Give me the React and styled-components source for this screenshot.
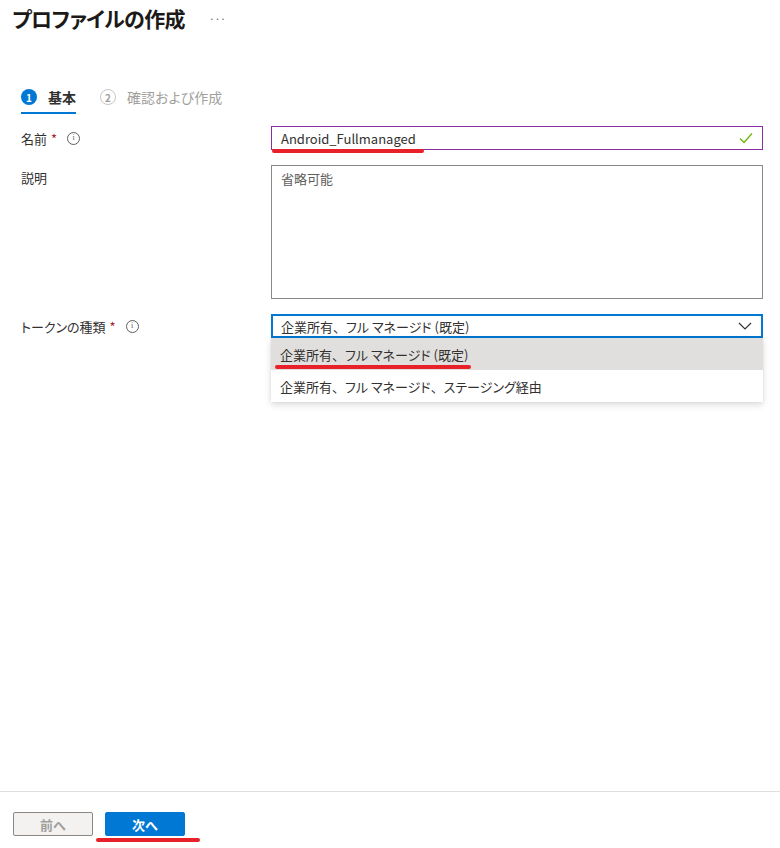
import React from 'react';
import styled, { createGlobalStyle } from 'styled-components';

const GlobalStyle = createGlobalStyle`
  html, body {
    margin: 0;
    padding: 0;
    background: #ffffff;
  }
  body {
    font-family: "Noto Sans CJK JP", "Noto Sans", "Liberation Sans", sans-serif;
    font-feature-settings: "palt";
    color: #323130;
  }
`;

const Page = styled.div`
  display: flex;
  flex-direction: column;
  width: 780px;
  height: 848px;
  overflow: hidden;
`;

const Header = styled.div`
  display: flex;
  align-items: center;
  gap: 24px;
  padding: 3px 12px 0;
  height: 30px;
`;

const Title = styled.h1`
  margin: 0;
  font-size: 21px;
  font-weight: 600;
  letter-spacing: -0.6px;
  color: #1b1a19;
`;

const More = styled.span`
  font-size: 10px;
  color: #605e5c;
`;

const Steps = styled.div`
  display: flex;
  gap: 24px;
  padding: 50px 21px 0;
`;

const Step = styled.div`
  display: flex;
  align-items: center;
  gap: 11px;
  height: 28px;
  border-bottom: 2px solid ${p => (p.active ? '#0078d4' : 'transparent')};
  font-size: 14px;
  font-weight: ${p => (p.active ? 600 : 400)};
  color: ${p => (p.active ? '#323130' : '#a19f9d')};
  padding-bottom: 1px;
`;

const StepNum = styled.span`
  width: 16px;
  height: 16px;
  border-radius: 50%;
  display: flex;
  align-items: center;
  justify-content: center;
  font-size: 10px;
  font-weight: 700;
  box-sizing: border-box;
  background: ${p => (p.active ? '#0078d4' : 'transparent')};
  color: ${p => (p.active ? '#ffffff' : '#a19f9d')};
  border: ${p => (p.active ? 'none' : '1.5px solid #c8c6c4')};
`;

const Form = styled.div`
  display: flex;
  flex-direction: column;
  gap: 15px;
  padding: 12px 17px 0 21px;
`;

const Row = styled.div`
  display: grid;
  grid-template-columns: 250px 1fr;
  align-items: start;
`;

const Label = styled.div`
  display: flex;
  align-items: center;
  gap: 4px;
  height: 24px;
  font-size: 13px;
  color: #323130;
`;

const Star = styled.span`
  color: #a4262c;
  font-size: 13px;
  margin-right: 6px;
`;

const Info = styled.span`
  width: 11px;
  height: 11px;
  border: 1px solid #605e5c;
  border-radius: 50%;
  display: inline-flex;
  align-items: center;
  justify-content: center;
  font-size: 8px;
  font-family: "Liberation Serif", serif;
  color: #605e5c;
  line-height: 1;
`;

const Field = styled.div`
  display: flex;
  align-items: center;
  justify-content: space-between;
  height: 24px;
  box-sizing: border-box;
  border: ${p => p.border || '1px solid #8a8886'};
  padding: 0 9px 0 ${p => (p.focused ? '8px' : '9px')};
  font-size: 13px;
  color: #323130;
  background: #fff;
`;

const TextArea = styled.div`
  height: 134px;
  box-sizing: border-box;
  border: 1px solid #8a8886;
  padding: 3px 9px;
  font-size: 13px;
  color: #605e5c;
`;

const FieldWrap = styled.div`
  position: relative;
`;

const Menu = styled.div`
  position: absolute;
  top: 24px;
  left: 0;
  right: 0;
  background: #fff;
  box-shadow: 0 3px 7px rgba(0, 0, 0, 0.14), 0 0 2px rgba(0, 0, 0, 0.1);
  border-radius: 0 0 2px 2px;
  z-index: 2;
`;

const Option = styled.div`
  height: 32px;
  display: flex;
  align-items: center;
  padding: 0 9px;
  font-size: 13px;
  color: #323130;
  background: ${p => (p.selected ? '#e1dfdd' : '#ffffff')};
`;

const Comma = styled.span`
  font-feature-settings: normal;
`;

const Mark = styled.div`
  position: absolute;
  height: 4px;
  border-radius: 2px;
  background: #e8202a;
  z-index: 3;
`;

const Spacer = styled.div`
  flex: 1;
`;

const Footer = styled.div`
  border-top: 1px solid #e1dfdd;
  display: flex;
  gap: 12px;
  padding: 20px 13px 0;
  height: 57px;
  box-sizing: border-box;
  position: relative;
`;

const Button = styled.button`
  width: 80px;
  height: 24px;
  box-sizing: border-box;
  font-family: inherit;
  font-size: 13px;
  font-weight: 600;
  border-radius: 2px;
  border: ${p => (p.primary ? '1px solid #0078d4' : '1px solid #8a8886')};
  background: ${p => (p.primary ? '#0078d4' : '#f3f2f1')};
  color: ${p => (p.primary ? '#ffffff' : '#a19f9d')};
  padding: 0;
`;

const Check = () => (
  <svg width="14" height="12" viewBox="0 0 14 12">
    <path d="M1 6.5 L5 10.5 L13 1.5" fill="none" stroke="#6bb700" strokeWidth="1.3" />
  </svg>
);

const Chevron = () => (
  <svg width="14" height="8" viewBox="0 0 14 8">
    <path d="M1 1 L7 7 L13 1" fill="none" stroke="#323130" strokeWidth="1.2" />
  </svg>
);

const c = <Comma>、</Comma>;

export default function App() {
  return (
    <Page>
      <GlobalStyle />
      <Header>
        <Title>プロファイルの作成</Title>
        <More>···</More>
      </Header>

      <Steps>
        <Step active>
          <StepNum active>1</StepNum>
          基本
        </Step>
        <Step>
          <StepNum>2</StepNum>
          確認および作成
        </Step>
      </Steps>

      <Form>
        <Row>
          <Label>
            名前<Star>*</Star>
            <Info>i</Info>
          </Label>
          <FieldWrap>
            <Field border="1px solid #8a2da5">
              Android_Fullmanaged
              <Check />
            </Field>
            <Mark style={{ left: 1, top: 23, width: 152 }} />
          </FieldWrap>
        </Row>

        <Row>
          <Label>説明</Label>
          <TextArea>省略可能</TextArea>
        </Row>

        <Row>
          <Label>
            トークンの種類<Star>*</Star>
            <Info>i</Info>
          </Label>
          <FieldWrap>
            <Field border="2px solid #0078d4" focused>
              <span>企業所有{c}フル マネージド (既定)</span>
              <Chevron />
            </Field>
            <Menu>
              <Option selected>企業所有{c}フル マネージド (既定)</Option>
              <Option>企業所有{c}フル マネージド{c}ステージング経由</Option>
            </Menu>
            <Mark style={{ left: 4, top: 51, width: 196 }} />
          </FieldWrap>
        </Row>
      </Form>

      <Spacer />

      <Footer>
        <Button>前へ</Button>
        <Button primary>次へ</Button>
        <Mark style={{ left: 96, top: 46, width: 104 }} />
      </Footer>
    </Page>
  );
}
